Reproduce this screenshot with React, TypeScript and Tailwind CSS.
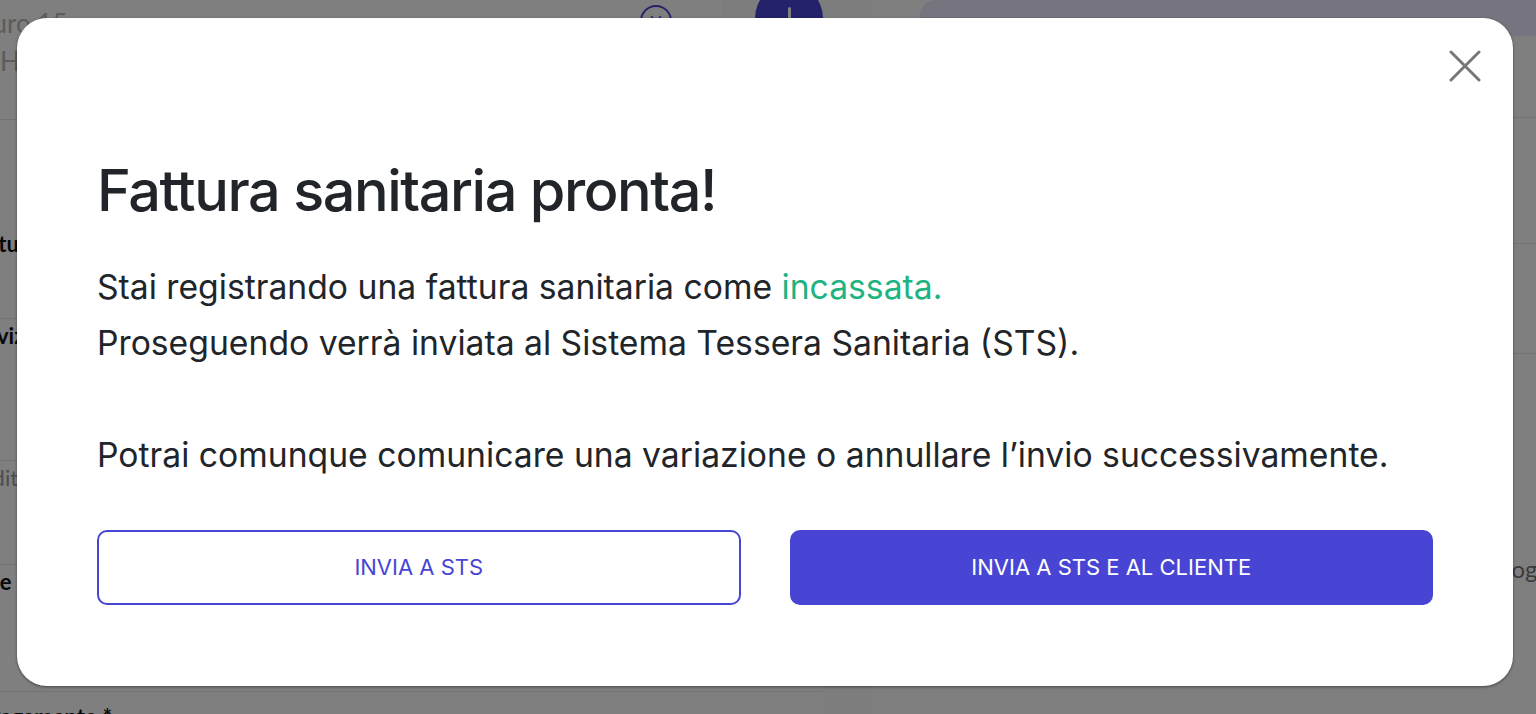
import { X } from 'lucide-react';

const formRows = [
  { label: 'Fattura', bold: true, h: 'h-[92px]', offset: '-ml-[31px]' },
  { label: 'Servizi', bold: true, h: 'h-[142px]', offset: '-ml-[35px]' },
  { label: 'Accredito', bold: false, h: 'h-[104px]', offset: '-ml-[62px]' },
  { label: 'Cliente *', bold: true, h: 'h-[127px]', offset: '-ml-[58px]' },
];

function BackgroundPage() {
  return (
    <div className="flex h-full">
      {/* Main form column */}
      <main className="flex w-[872px] flex-col">
        <header className="flex h-[120px] items-start border-b border-gray-200">
          <div className="-ml-[22px] w-[622px] pt-[4px] font-['Lato',sans-serif] text-[26px] leading-[38px] text-[#b9b9b9]">
            <div>Euro 15</div>
            <div className="pl-[22px]">H6 2024</div>
          </div>
          <div className="mt-[5px] ml-[40px] flex h-[32px] w-[32px] items-center justify-center rounded-full border-2 border-[#4644d6] text-[#4644d6]">
            <X size={18} strokeWidth={2} />
          </div>
          <div className="ml-[50px] flex h-[120px] w-[150px] justify-start bg-[#fbfbfb] pl-[33px]">
            <div className="-mt-[16px] flex h-[68px] w-[68px] items-center justify-center rounded-full bg-[#4644d6]">
              <div className="h-[22px] w-[3px] rounded bg-white" />
            </div>
          </div>
        </header>
        <div className="flex flex-1">
          <div className="flex flex-1 flex-col">
            <div className="h-[107px]" />
            {formRows.map((row) => (
              <div key={row.label} className={`${row.h} flex items-start border-b border-gray-200`}>
                <span
                  className={`${row.offset} whitespace-nowrap font-['Lato',sans-serif] text-[22px] ${row.bold ? 'font-bold text-[#111]' : 'text-[#9a9a9a]'}`}
                >
                  {row.label}
                </span>
              </div>
            ))}
            <div className="-ml-[13px] pt-[8px] whitespace-nowrap font-['Lato',sans-serif] text-[22px] font-bold text-[#111]">
              Pagamento *
            </div>
          </div>
          <div className="w-[49px] bg-[#fbfbfd]" />
        </div>
      </main>

      {/* Right summary column */}
      <aside className="flex flex-1 flex-col pl-[48px]">
        <div className="h-[36px] rounded-tl-[16px] bg-[#eae8fe]" />
        <div className="h-[82px] border-b border-gray-200" />
        <div className="h-[126px] border-b border-gray-200" />
        <div className="h-[110px] border-b border-gray-200" />
        <div className="flex h-[300px] items-center pl-[580px] pt-[130px] whitespace-nowrap font-['Lato',sans-serif] text-[24px] text-[#777]">
          Logo fattura
        </div>
        <div className="h-[16px] w-[440px] rounded-b-[16px] bg-[#eae8fe]" />
      </aside>
    </div>
  );
}

export default function App() {
  return (
    <div className="relative h-[714px] w-full overflow-hidden bg-white">
      <BackgroundPage />

      {/* Overlay + dialog */}
      <div className="absolute inset-0 bg-black/50 pt-[18px] pr-[23px] pb-[28px] pl-[17px]">
        <div className="relative h-full rounded-[30px] bg-white px-[80px] pt-[139px] font-['Inter',sans-serif] shadow-[0_1px_3px_rgba(0,0,0,0.45)]">
          <button className="absolute top-[32px] right-[32px] text-[#777]">
            <svg width="32" height="32" viewBox="0 0 32 32" fill="none" stroke="currentColor" strokeWidth="3" strokeLinecap="round">
              <path d="M2 2 L30 30 M30 2 L2 30" />
            </svg>
          </button>

          <h2 className="text-[57.6px] leading-[67px] font-medium tracking-[-0.025em] text-[#212529]">
            Fattura sanitaria pronta!
          </h2>

          <div className="mt-[35px] text-[33.7px] leading-[56px] text-[#212529]">
            <p>
              Stai registrando una fattura sanitaria come <span className="text-[#1db482]">incassata.</span>
            </p>
            <p>Proseguendo verrà inviata al Sistema Tessera Sanitaria (STS).</p>
            <p className="mt-[56px]">
              Potrai comunque comunicare una variazione o annullare l’invio successivamente.
            </p>
          </div>

          <div className="mt-[47px] grid grid-cols-2 gap-[49px]">
            <button className="h-[75px] rounded-[10px] border-2 border-[#4845d4] text-[22px] uppercase text-[#4845d4]">
              Invia a STS
            </button>
            <button className="h-[75px] rounded-[10px] bg-[#4845d4] text-[22px] uppercase text-white">
              Invia a STS e al cliente
            </button>
          </div>
        </div>
      </div>
    </div>
  );
}
